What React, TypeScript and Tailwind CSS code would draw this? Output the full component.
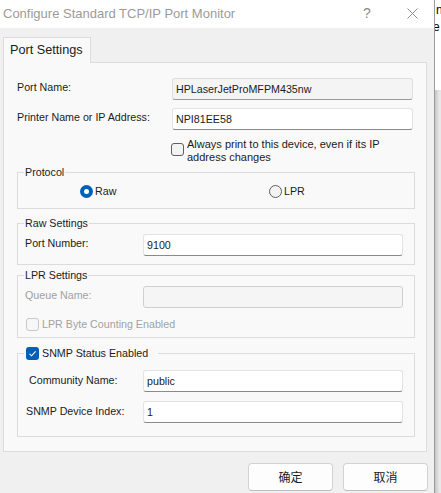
import React from "react";

type FieldKind = "normal" | "readonly" | "disabled";

function Field({ value, kind = "normal", width }: { value?: string; kind?: FieldKind; width: string }) {
  const look =
    kind === "readonly"
      ? "bg-[#f4f4f4] border-[#dedede] border-b-[#9a9a9a]"
      : kind === "disabled"
      ? "bg-[#f5f5f5] border-[#cfcfcf]"
      : "bg-white border-[#e3e3e3] border-b-[#8a8a8a]";
  return (
    <div className={`${width} h-[22px] flex items-center pl-[3px] border rounded-[3px] ${look}`}>
      <span className="leading-none">{value}</span>
    </div>
  );
}

function Check({ checked = false, disabled = false }: { checked?: boolean; disabled?: boolean }) {
  if (checked) {
    return (
      <span className="w-[13px] h-[13px] shrink-0 rounded-[3px] bg-[#005fb8] flex items-center justify-center">
        <svg width="9" height="9" viewBox="0 0 9 9" fill="none">
          <path d="M1.5 4.8 L3.6 6.8 L7.6 2.4" stroke="white" strokeWidth="1.1" />
        </svg>
      </span>
    );
  }
  return (
    <span
      className={`block w-[13px] h-[13px] shrink-0 rounded-[3px] border ${
        disabled ? "border-[#c8c8c8] bg-[#f7f7f7]" : "border-[#5f5f5f] bg-[#f3f3f3]"
      }`}
    />
  );
}

function Radio({ checked = false }: { checked?: boolean }) {
  if (checked) {
    return (
      <span className="w-[13px] h-[13px] shrink-0 rounded-full bg-[#005fb8] flex items-center justify-center">
        <span className="w-[5px] h-[5px] rounded-full bg-white" />
      </span>
    );
  }
  return <span className="block w-[13px] h-[13px] shrink-0 rounded-full border border-[#5f5f5f] bg-[#f3f3f3]" />;
}

export default function App() {
  return (
    <div className="flex w-[441px] h-[493px] overflow-hidden bg-white font-['Liberation_Sans',Arial,sans-serif] text-[10.7px] text-[#1b1b1b]">
      {/* dialog */}
      <div className="flex w-[435px] shrink-0 flex-col bg-[#f0f0f0] border-r border-[#9a9a9a]">
        {/* title bar */}
        <div className="h-[28px] bg-white flex items-center pb-[2px] text-[#9b9b9b]">
          <span className="pl-[3px] text-[13px] leading-none">Configure Standard TCP/IP Port Monitor</span>
          <span className="ml-auto w-[8px] text-[14px] leading-none text-[#8c8c8c]">?</span>
          <span className="ml-[36px] mr-[16px] flex">
            <svg width="11" height="11" viewBox="0 0 11 11">
              <path d="M0.5 0.5 L10.5 10.5 M10.5 0.5 L0.5 10.5" stroke="#8c8c8c" strokeWidth="1" />
            </svg>
          </span>
        </div>

        <div className="pl-[3px] pt-[9px]">
          {/* tab */}
          <div className="relative z-10 -mb-px w-[88px] h-[26px] flex items-center pl-[6px] pb-px bg-[#f9f9f9] border border-b-0 border-[#dcdcdc] text-[12.7px] leading-none">
            Port Settings
          </div>

          {/* panel */}
          <div className="w-[424px] h-[390px] bg-[#f9f9f9] border border-[#dcdcdc] pl-[13px] pt-[15px] flex flex-col">
            <div className="flex items-center h-[22px]">
              <span className="w-[155px] -mt-[3px]">Port Name:</span>
              <Field value="HPLaserJetProMFPM435nw" kind="readonly" width="w-[241px]" />
            </div>
            <div className="flex items-center h-[22px] mt-[8px]">
              <span className="w-[155px] -mt-[3px]">Printer Name or IP Address:</span>
              <Field value="NPI81EE58" width="w-[241px]" />
            </div>
            <div className="flex mt-[8px] h-[26px] pl-[154px]">
              <span className="mt-[5px] shrink-0">
                <Check />
              </span>
              <span className="ml-[3px] leading-[13px] text-[11px]">
                Always print to this device, even if its IP
                <br />
                address changes
              </span>
            </div>

            {/* Protocol */}
            <fieldset className="w-[398px] border border-[#dcdcdc] px-0 pb-[10px]">
              <legend className="ml-[6px] px-[1px] leading-[16px]">Protocol</legend>
              <div className="flex items-center h-[14px] mt-[4px] pl-[62px]">
                <span className="flex items-center gap-[2px] w-[189px]">
                  <Radio checked />
                  <span>Raw</span>
                </span>
                <span className="flex items-center gap-[2px]">
                  <Radio />
                  <span>LPR</span>
                </span>
              </div>
            </fieldset>

            {/* Raw Settings */}
            <fieldset className="w-[398px] mt-[6px] border border-[#dcdcdc] px-0 pb-[8px]">
              <legend className="ml-[6px] px-[1px] leading-[16px]">Raw Settings</legend>
              <div className="flex items-center mt-[3px] pl-[7px]">
                <span className="w-[118px] -mt-[4px]">Port Number:</span>
                <Field value="9100" width="w-[260px]" />
              </div>
            </fieldset>

            {/* LPR Settings */}
            <fieldset className="w-[398px] mt-[2px] border border-[#dcdcdc] px-0 pb-[6px]">
              <legend className="ml-[6px] px-[1px] leading-[16px]">LPR Settings</legend>
              <div className="flex items-center mt-[3px] pl-[7px]">
                <span className="w-[118px] -mt-[4px] text-[#a2a2a2]">Queue Name:</span>
                <Field kind="disabled" width="w-[260px]" />
              </div>
              <div className="flex items-center h-[13px] mt-[10px] pl-[8px]">
                <Check disabled />
                <span className="ml-[3px] text-[#a2a2a2]">LPR Byte Counting Enabled</span>
              </div>
            </fieldset>

            {/* SNMP */}
            <fieldset className="w-[398px] mt-[7px] border border-[#dcdcdc] px-0 pb-[13px]">
              <legend className="ml-[6px] pl-[2px] pr-[10px] h-[16px] flex items-center">
                <Check checked />
                <span className="ml-[3px] leading-none">SNMP Status Enabled</span>
              </legend>
              <div className="flex items-center mt-[9px]">
                <span className="w-[125px] pl-[11px] -mt-[2px]">Community Name:</span>
                <Field value="public" width="w-[260px]" />
              </div>
              <div className="flex items-center mt-[9px]">
                <span className="w-[125px] pl-[8px] -mt-[2px]">SNMP Device Index:</span>
                <Field value="1" width="w-[260px]" />
              </div>
            </fieldset>
          </div>
        </div>

        {/* buttons */}
        <div className="flex justify-end gap-[10px] mt-[11px] pr-[6px] font-['Noto_Sans_CJK_SC','Liberation_Sans',sans-serif] text-[12px]">
          <button className="w-[85px] h-[28px] rounded-[4px] border border-[#d2d2d2] border-b-[#bdbdbd] bg-[#fdfdfd] leading-none">
            确定
          </button>
          <button className="w-[85px] h-[28px] rounded-[4px] border border-[#d2d2d2] border-b-[#bdbdbd] bg-[#fdfdfd] leading-none">
            取消
          </button>
        </div>
      </div>

      {/* window behind */}
      <div className="flex-1 flex flex-col">
        <div className="h-[90px] bg-white pt-[2px] text-[12px] leading-[17px] text-black overflow-hidden">
          <div className="ml-[1px]">n</div>
          <div className="-ml-[2px]">e</div>
        </div>
        <div className="flex-1 bg-gradient-to-r from-[#c4c4c4] via-[#e6e6e6] to-[#ececec]" />
      </div>
    </div>
  );
}
